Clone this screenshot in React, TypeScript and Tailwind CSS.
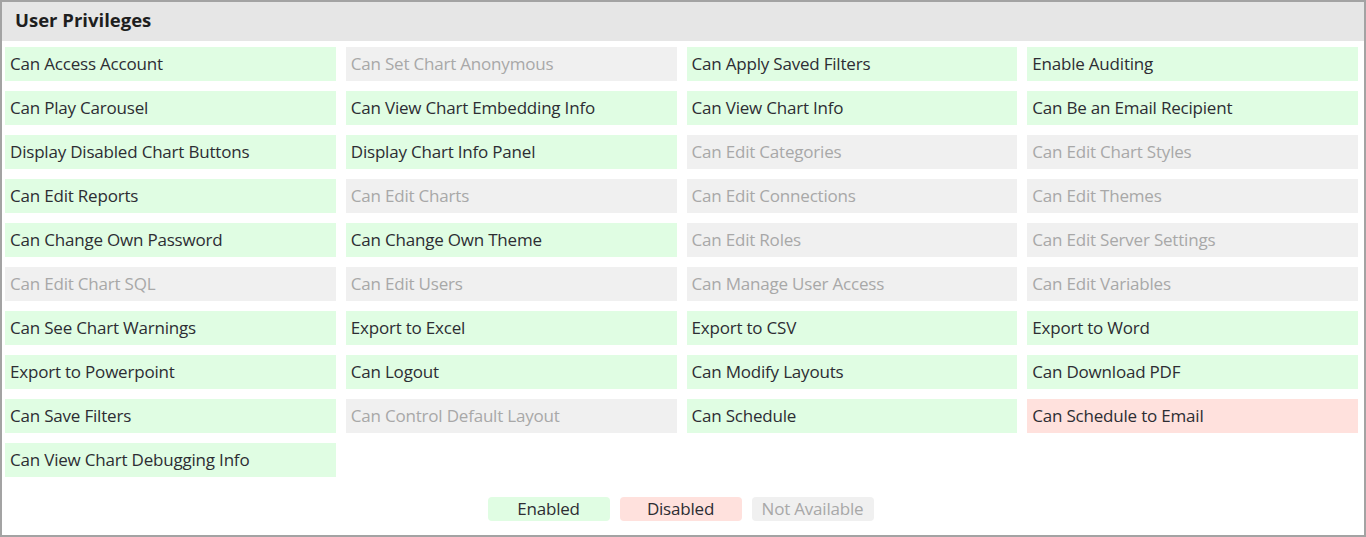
import React from "react";

type Status = "enabled" | "disabled" | "na";

const PRIVILEGES: { label: string; status: Status }[] = [
  { label: "Can Access Account", status: "enabled" },
  { label: "Can Set Chart Anonymous", status: "na" },
  { label: "Can Apply Saved Filters", status: "enabled" },
  { label: "Enable Auditing", status: "enabled" },
  { label: "Can Play Carousel", status: "enabled" },
  { label: "Can View Chart Embedding Info", status: "enabled" },
  { label: "Can View Chart Info", status: "enabled" },
  { label: "Can Be an Email Recipient", status: "enabled" },
  { label: "Display Disabled Chart Buttons", status: "enabled" },
  { label: "Display Chart Info Panel", status: "enabled" },
  { label: "Can Edit Categories", status: "na" },
  { label: "Can Edit Chart Styles", status: "na" },
  { label: "Can Edit Reports", status: "enabled" },
  { label: "Can Edit Charts", status: "na" },
  { label: "Can Edit Connections", status: "na" },
  { label: "Can Edit Themes", status: "na" },
  { label: "Can Change Own Password", status: "enabled" },
  { label: "Can Change Own Theme", status: "enabled" },
  { label: "Can Edit Roles", status: "na" },
  { label: "Can Edit Server Settings", status: "na" },
  { label: "Can Edit Chart SQL", status: "na" },
  { label: "Can Edit Users", status: "na" },
  { label: "Can Manage User Access", status: "na" },
  { label: "Can Edit Variables", status: "na" },
  { label: "Can See Chart Warnings", status: "enabled" },
  { label: "Export to Excel", status: "enabled" },
  { label: "Export to CSV", status: "enabled" },
  { label: "Export to Word", status: "enabled" },
  { label: "Export to Powerpoint", status: "enabled" },
  { label: "Can Logout", status: "enabled" },
  { label: "Can Modify Layouts", status: "enabled" },
  { label: "Can Download PDF", status: "enabled" },
  { label: "Can Save Filters", status: "enabled" },
  { label: "Can Control Default Layout", status: "na" },
  { label: "Can Schedule", status: "enabled" },
  { label: "Can Schedule to Email", status: "disabled" },
  { label: "Can View Chart Debugging Info", status: "enabled" },
];

const STATUS_CLASSES: Record<Status, string> = {
  enabled: "bg-[#e0fde3] text-[#2d2d33]",
  disabled: "bg-[#ffe1dd] text-[#2d2d33]",
  na: "bg-[#f0f0f0] text-[#a8a8a8]",
};

const LEGEND: { label: string; status: Status }[] = [
  { label: "Enabled", status: "enabled" },
  { label: "Disabled", status: "disabled" },
  { label: "Not Available", status: "na" },
];

export default function App() {
  return (
    <div
      className="flex h-[537px] w-[1366px] flex-col border-2 border-[#a3a3a3] bg-white"
      style={{ fontFamily: '"Open Sans", "Liberation Sans", sans-serif' }}
    >
      <div className="flex h-[39px] items-center bg-[#e6e6e6] px-[13px] pb-[3px]">
        <h2 className="text-[18.5px] font-bold text-[#1e1e1e]">User Privileges</h2>
      </div>

      <div className="grid grid-cols-4 gap-[10px] pl-[3px] pr-[6px] pt-[6px]">
        {PRIVILEGES.map((p) => (
          <div
            key={p.label}
            className={[
              "flex h-[34px] items-center px-[5px] pb-[2px] text-[17px] leading-none tracking-[-0.2px]",
              STATUS_CLASSES[p.status],
            ].join(" ")}
          >
            {p.label}
          </div>
        ))}
      </div>

      <div className="mt-[20px] flex justify-center gap-[10px] pr-[5px]">
        {LEGEND.map((l) => (
          <span
            key={l.label}
            className={[
              "flex h-[24px] w-[122px] items-center justify-center rounded pb-[1px] text-[17px] leading-none tracking-[-0.2px]",
              STATUS_CLASSES[l.status],
            ].join(" ")}
          >
            {l.label}
          </span>
        ))}
      </div>
    </div>
  );
}
